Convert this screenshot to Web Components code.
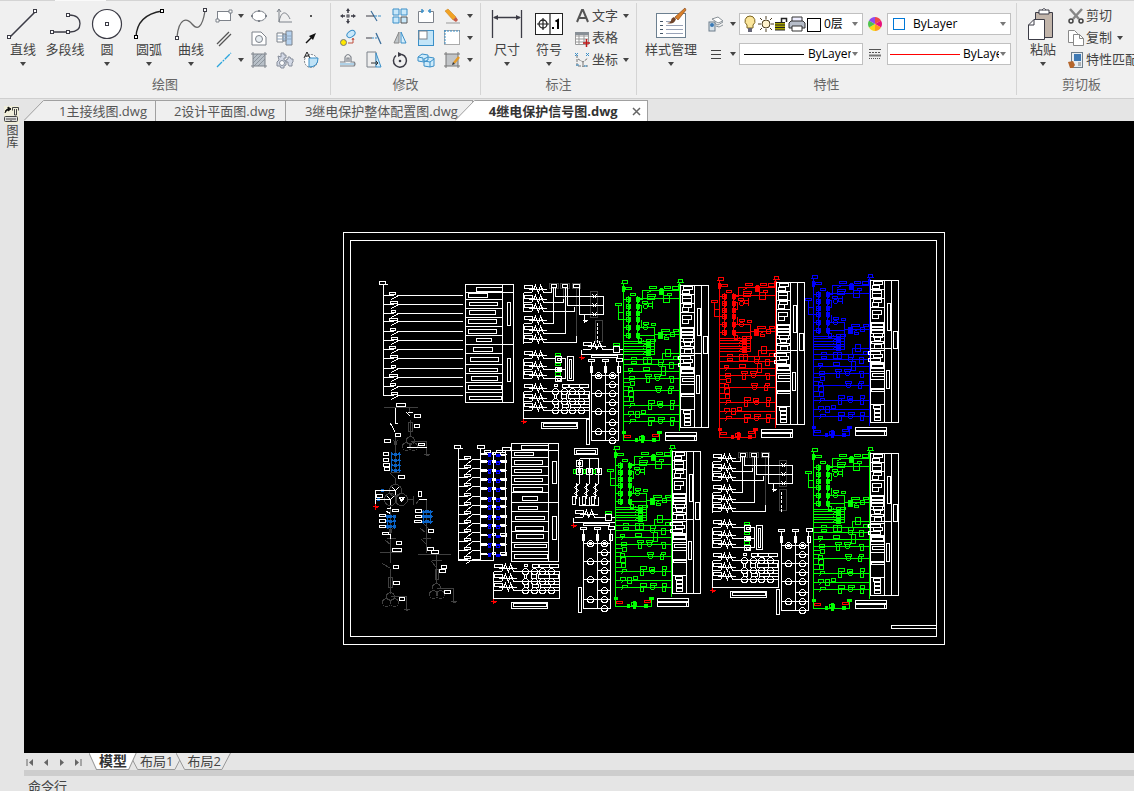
<!DOCTYPE html>
<html lang="zh-CN">
<head>
<meta charset="utf-8">
<title>4继电保护信号图.dwg</title>
<style>
html, body { height: 100%; }
body {
  margin: 0; overflow: hidden; background: #e5e5e5; color: #444;
  font: 13px/18px "Open Sans", "Noto Sans CJK SC", sans-serif;
}
</style>
</head>
<body>
<cad-app></cad-app>
<script>
/* ---------- icons ---------- */
const K = '#3c3c46', G = '#7d828a', B = '#3a8fc8';
const node = (x, y, c = K) => `<rect x="${x}" y="${y}" width="3" height="3" fill="#fff" stroke="${c}"/>`;
const ICONS = {
  line: [34, 34, `<path d="M4 30 30 4" stroke="${K}" stroke-width="1.6"/>${node(1.5, 28.5)}${node(27.5, 2.5)}`],
  polyline: [34, 34, `<path d="M5 25H22C30 25 32 21 32 16.500S29 8 21 8" fill="none" stroke="${K}" stroke-width="1.300"/>${node(2.5, 23.500)}${node(18.500, 23.500)}${node(18.500, 6.500)}`],
  circle: [34, 34, `<circle cx="17" cy="17" r="14.500" fill="#fff" stroke="${K}" stroke-width="1.200"/>${node(15.500, 15.500)}`],
  arc: [34, 34, `<path d="M4 30Q5 8 30 4" fill="none" stroke="#222" stroke-width="1.300"/>${node(2.500, 28.500, '#000')}${node(28.500, 2.500, '#000')}`],
  curve: [34, 34, `<path d="M3 30C5 10 13 11 18 17S28 22 31 4" fill="none" stroke="#666" stroke-width="1.300"/>${node(1.500, 29.500)}${node(29.500, 1.500)}`],
  rect: [18, 18, `<rect x="2.500" y="4.500" width="13" height="9" fill="#fff" stroke="${G}"/><path d="M1 12h3v3H1zM14 3h3v3h-3z" fill="#fff" stroke="${G}"/>`],
  ellipse: [18, 18, `<ellipse cx="9" cy="9" rx="7" ry="5" fill="#fff" stroke="${G}"/><path d="M1 8h2v2H1zM15 8h2v2h-2zM8 3h2v2H8zM8 13h2v2H8z" fill="${G}"/>`],
  graph: [18, 18, `<path d="M3 2v13h13M1 5l2-3 2 3M3 15C5 4 10 3 14 12" fill="none" stroke="${G}"/>`],
  point: [18, 18, `<rect x="8" y="8" width="2" height="2" fill="#555"/>`],
  dline: [18, 18, `<path d="M2 15 14 3M4 17 16 5" stroke="#555" stroke-width="1.300"/>`],
  region: [18, 18, `<path d="M2 3h9l5 5v8H2z" fill="#fff" stroke="${G}"/><circle cx="9" cy="10" r="3.500" fill="#e8eef2" stroke="${G}"/>`],
  bolt: [18, 18, `<path d="M1 4h6v9H1z" fill="#fff" stroke="${G}"/><path d="M7 5h3v7H7zM10 2h6v14h-6z" fill="#b5d2f0" stroke="${G}"/><path d="M1 7h15M1 10h15" stroke="#8fa6bd"/>`],
  arrow: [18, 18, `<path d="M4 14 10 8" stroke="#111" stroke-width="1.500"/><path d="M7 7l7-3-3 7z" fill="#111"/>`],
  cline: [18, 18, `<path d="M2 16 16 2" stroke="#2ba5dc" stroke-width="1.300" stroke-dasharray="7 1 2 1"/>`],
  hatch: [18, 18, `<rect x="3" y="3" width="12" height="12" fill="#b8c0c8"/><path d="M3 8l5-5M3 12l9-9M4 15 15 4M8 15l7-7" stroke="#8e969e"/><path d="M3 1v16M15 1v16M1 3h16M1 15h16" stroke="${G}"/>`],
  gears: [18, 18, `<path d="M5 2h3v2h2v3H8v2l2 1v4l-2 1v2H5l-1-2H1v-4l2-2-1-4 3 1z" fill="#d3d9e6" stroke="#858c99"/><path d="M12 6h2l1 2h2v3l-1 1v3h-3l-1-2v-2h-2V9l2-1z" fill="#d3d9e6" stroke="#858c99"/><circle cx="6" cy="12" r="2.500" fill="#fff" stroke="#858c99"/>`],
  area: [18, 18, `<circle cx="9" cy="10" r="6.500" fill="#fff" stroke="${G}" stroke-dasharray="2 1"/><path d="M7 7h9q0 9-9 9z" fill="#bfe2f6" stroke="${B}"/><path d="M2 7 5 1l3 6M3 5h4" fill="none" stroke="#222"/>`],
  move: [18, 18, `<path d="M9 3v3M9 12v3M3 9h3M12 9h3" stroke="${K}" stroke-width="1.500"/><path d="M9 1 7 4h4zM9 17l-2-3h4zM1 9l3-2v4zM17 9l-3-2v4z" fill="${K}"/><rect x="8" y="8" width="2" height="2" fill="#fff" stroke="${K}"/>`],
  trim: [18, 18, `<path d="M6 4 12 14" stroke="#3b6d9a" stroke-width="1.200"/><path d="M1 9h8" stroke="${K}"/><path d="M9 9h8" stroke="${B}" stroke-dasharray="3 1"/>`],
  array: [18, 18, `<path d="M2 2h6v6H2zM10 2h6v6h-6zM2 10h6v6H2z" fill="#c9e8fa" stroke="${B}"/><path d="M10 10h6v6h-6z" fill="#c9e8fa" stroke="#555"/>`],
  brk: [18, 18, `<path d="M5 4.500H1.500v11h15v-11H13" fill="#fff" stroke="${G}"/><path d="M5 2v4M13 2v4M7 4H5M11 4h2" stroke="${B}" stroke-width="1.500"/>`],
  erase: [18, 18, `<path d="M2 4l3-2 8 8-3 3z" fill="#f2a324" stroke="#c47a12" stroke-width=".5"/><path d="M10 13l3-3 2 3-2 2z" fill="#c45c4a"/><path d="M3 16h14" stroke="#999"/>`],
  copy: [18, 18, `<circle cx="4.500" cy="13.500" r="3" fill="#ffe800" stroke="#777"/><ellipse cx="12" cy="5" rx="4.500" ry="3" transform="rotate(-35 12 5)" fill="#c9e8fa" stroke="${B}"/><path d="M9 14h5v-4M13 11l1-2 1 2" fill="none" stroke="#c05040"/>`],
  extend: [18, 18, `<path d="M11 4l5 11" stroke="#3b6d9a" stroke-width="1.300"/><path d="M1 9h6" stroke="${K}"/><path d="M7 9h6" stroke="${B}" stroke-dasharray="2 1"/>`],
  mirror: [18, 18, `<path d="M8 3v11H3z" fill="#bfc5c9" stroke="#888"/><path d="M10 3v11h5z" fill="#d8effc" stroke="${B}"/>`],
  scale: [18, 18, `<rect x="1.500" y="1.500" width="15" height="15" fill="#c3e5f8" stroke="${B}"/><rect x="2" y="2" width="8" height="8" fill="#fff" stroke="${G}"/>`],
  dash: [18, 18, `<rect x="1.500" y="1.500" width="15" height="14" fill="#fff" stroke="#aaa"/><path d="M1 2h16M2 1v15" stroke="${B}" stroke-dasharray="2 1"/>`],
  offset: [18, 18, `<path d="M1 11h5V6q3-5 6 0v5h3q2 2 0 4H1M8 11V7h2v4" fill="none" stroke="${G}" stroke-width="1.200"/><path d="M1 13h14" stroke="#6fb1dd"/>`],
  stretch: [18, 18, `<path d="M2 1h9v15H2z" fill="#eee" stroke="${G}"/><path d="M11 2l5 14h-5z" fill="#d0ecfb" stroke="${B}"/><path d="M6 12h7M11 10l2 2-2 2" fill="none" stroke="#333"/>`],
  rotate: [18, 18, `<path d="M11 3.500A6.500 6.500 0 1 1 5 4.500" fill="none" stroke="${K}" stroke-width="1.500"/><path d="M7 1l5 2.500L7 6z" fill="${K}"/><circle cx="9" cy="10" r="1.300" fill="${K}"/>`],
  explode: [18, 18, `<path d="M1 6l4-3 6 1v5l-4 2-6-1zM7 8l4-2 6 1v8l-4 1-6-1z" fill="#d0ecfb" stroke="${B}"/><path d="M7 10l6 1v5M13 11l4-3M1 6l5 1v3" fill="none" stroke="${B}"/>`],
  hedit: [18, 18, `<rect x="3" y="3" width="12" height="12" fill="#c2c5c8"/><path d="M3 1v16M15 1v16M1 3h16M1 15h16" stroke="#777"/><path d="M11 12l5-6" stroke="#e39a28" stroke-width="2.500"/><path d="M9 14l1-3 2 2z" fill="#333"/>`],
  dim: [34, 34, `<path d="M2.500 3v28M31.500 3v28M4 10.500h26" stroke="${K}" stroke-width="1.300"/><path d="M3 10.500l5-2.500v5zM31 10.500l-5-2.500v5z" fill="${K}"/>`],
  symbol: [34, 34, `<rect x="3.500" y="6.500" width="27" height="21" fill="#fff" stroke="#222"/><path d="M18 6v21M5 17h12M11 11v12" stroke="#222" stroke-width="1.200"/><circle cx="11" cy="17" r="4" fill="none" stroke="#222" stroke-width="1.300"/><rect x="20" y="20" width="2" height="2"/><path d="M23.500 14.500 26 13v9" fill="none" stroke="#000" stroke-width="2"/>`],
  text: [18, 18, `<path d="M4 15 9 3h1l5 12M6 11h7" fill="none" stroke="#555" stroke-width="2"/>`],
  table: [18, 18, `<path d="M2.500 3.500h13v12h-13zM2 7h14M2 10h14M2 13h14M6 4v12M11 4v12" fill="#fff" stroke="#999"/><path d="M2 3h14v3H2z" fill="#888f96"/><path d="M10 14h7M13.500 10v8" stroke="#c01818" stroke-width="1.500"/>`],
  coord: [18, 18, `<path d="M4 4v11h11M5 8l5 3 5-4M10 11v5" fill="none" stroke="#777" stroke-dasharray="3 1"/><path d="M2 2l3 3M5 2 2 5M13 2l3 3M16 2l-3 3M3 14h3M11 15h3" stroke="${B}"/>`],
  styles: [34, 34, `<rect x="2.500" y="6.500" width="29" height="24" fill="#fff" stroke="#6c8090"/><path d="M6 14.500h3M6 18.500h3M6 22.500h3M6 26.500h3" stroke="#456" /><path d="M12 14.500h8M12 18.500h17M12 22.500h17M12 26.500h17" stroke="#9aa3b8"/><path d="M31 1l-10 9 3 3 8-10z" fill="#d9802a" stroke="#8b4c1c" stroke-width=".7"/><path d="M13 16q7 2 9-4l-2-2q-3 1-3 4-1 2-4 2z" fill="#70442a"/>`],
  layers: [18, 18, `<path d="M5 4l6-2 5 4-5 2zM7 8l4 2 5-3M9 11l3 1 4-2" fill="#fff" stroke="#8a9298"/><rect x="2" y="7" width="6" height="9" fill="#d7e2ea" stroke="#6d7d8a"/><circle cx="5" cy="10" r="2" fill="#3a79b5"/>`],
  weights: [18, 18, `<path d="M4 5.500h10M4 9.500h10M4 13.500h10" stroke="#444"/>`],
  wheel: [18, 18, `<path d="M9 9V2a7 7 0 0 1 6 3.500z" fill="#ef4848"/><path d="M9 9 15 5.500a7 7 0 0 1 0 7z" fill="#e8117c"/><path d="M9 9l6 3.500A7 7 0 0 1 9 16z" fill="#ff9d1c"/><path d="M9 9v7a7 7 0 0 1-6-3.500z" fill="#f7d916"/><path d="M9 9l-6 3.500a7 7 0 0 1 0-7z" fill="#4fc34d"/><path d="M9 9 3 5.500A7 7 0 0 1 9 2z" fill="#8d4cf0"/>`],
  types: [18, 18, `<path d="M3 4.500h12" stroke="#555"/><path d="M3 7.500h12" stroke="#555" stroke-dasharray="2 1"/><path d="M3 10.500h12" stroke="#777" stroke-width="2"/><path d="M3 13.500h12" stroke="#555" stroke-dasharray="1 1"/>`],
  bulb: [16, 18, `<path d="M8 1a5 5 0 0 1 3 9v3H5v-3a5 5 0 0 1 3-9z" fill="#fbe69c" stroke="#7b6420"/><path d="M6 13h4v4H6z" fill="#667"/>`],
  sun: [16, 18, `<circle cx="8" cy="9" r="4" fill="#fff3cd" stroke="#4b3d20"/><path d="M8 1v3M8 14v3M0 9h3M13 9h3M2 3l2 2M12 13l2 2M14 3l-2 2M4 13l-2 2" stroke="#4b3d20"/>`],
  lock: [14, 18, `<path d="M7.500 8V3.500h5V7" fill="none" stroke="#222" stroke-width="1.500"/><path d="M1 7h10v8H1z" fill="#a8a400"/><path d="M1 7.500h10M1 10h10M1 12.500h10M1 15h10" stroke="#222"/>`],
  printer: [18, 18, `<path d="M4 7V2h10v5" fill="#eef" stroke="#333"/><path d="M1 8l2-2h12l2 2v5H1z" fill="#b6bdc9" stroke="#333"/><path d="M4 11h10v5H4z" fill="#fff" stroke="#333"/>`],
  swatch: [15, 18, `<rect x="1.500" y="3.500" width="13" height="13" fill="#fff" stroke="#000"/>`],
  cyan: [16, 18, `<rect x="3.500" y="3.500" width="11" height="11" fill="#fff" stroke="#0078d7"/>`],
  paste: [34, 34, `<path d="M9.500 5.500h17v25h-17z" fill="#c2b5aa" stroke="${K}"/><path d="M13 3h10v4H13z" fill="#fff" stroke="${K}"/><path d="M16 3q2-3 4 0" fill="#fff" stroke="${K}"/><path d="M8 12.500h10.500v20H2.500V18z" fill="#fff" stroke="${K}"/><path d="M8 12.500V18H2.500" fill="none" stroke="${K}"/>`],
  cut: [18, 18, `<path d="M3 2l9 10M15 2 6 12" stroke="#888" stroke-width="2.500"/><circle cx="4" cy="14" r="2" fill="#eee" stroke="#444" stroke-width="1.500"/><circle cx="14" cy="14" r="2" fill="#eee" stroke="#444" stroke-width="1.500"/>`],
  copy2: [18, 18, `<path d="M1.500 1.500h6l3 3v9h-9z" fill="#fff" stroke="#888"/><path d="M6.500 5.500h6l4 4v7h-10z" fill="#fff" stroke="#888"/><path d="M12.500 5.500v4h4" fill="none" stroke="#888"/>`],
  match: [18, 18, `<rect x="4.500" y="1.500" width="11" height="15" fill="#e7edf2" stroke="#6d7d8a"/><rect x="7" y="3" width="7" height="7" fill="#3e79b4"/><path d="M11 12h3M11 14h3" stroke="#777"/><path d="M1 11l5-1 2 4-2 3H3z" fill="#b5662c"/>`],
  dock: [17, 18, `<path d="M1 0h15v18H1z" fill="#f0eeda"/><path d="M2 7q0-4 4-4M5 1l3 2-3 2z" fill="#111" stroke="#111"/><path d="M9.500 4.500v-3h6v3M11.500 3v6h2V3" fill="none" stroke="#444"/><rect x="1.500" y="10.500" width="13" height="5" rx="1" fill="#ddd" stroke="#444"/><path d="M3 13h4M9 13h4M8 12v3" stroke="#444"/>`],
  close: [10, 10, `<path d="M1 2l7 7M8 2 1 9" stroke="#666" stroke-width="1.500"/>`],
  caret: [8, 4, `<path d="M1 0h6L4 4z" fill="#444"/>`],
  drop: [8, 4, `<path d="M1 0h6L4 4z" fill="#777"/>`],
  first: [10, 10, `<path d="M2 2v7" stroke="#666"/><path d="M8 2v7L4 5.500z" fill="#666"/>`],
  prev: [10, 10, `<path d="M7 2v7L3 5.500z" fill="#666"/>`],
  next: [10, 10, `<path d="M3 2v7l4-3.500z" fill="#666"/>`],
  last: [10, 10, `<path d="M8 2v7" stroke="#666"/><path d="M2 2v7l4-3.500z" fill="#666"/>`],
};
const icon = n => {
  const [w, h, body] = ICONS[n];
  return `<svg width="${w}" height="${h}" viewBox="0 0 ${w} ${h}" aria-hidden="true">${body}</svg>`;
};

/* ---------- base ---------- */
const RESET = `*{box-sizing:border-box} svg{display:block;flex:none}
button{font:inherit;color:inherit;background:none;border:0;margin:0;padding:0;cursor:default}`;
function element(name, css, render) {
  customElements.define(name, class extends HTMLElement {
    connectedCallback() {
      if (this.shadowRoot) return;
      this.attachShadow({ mode: 'open' }).innerHTML = `<style>${RESET}${css}</style>${render(this)}`;
    }
  });
}

/* ---------- ribbon ---------- */
element('big-tool', `
  :host{display:block;width:42px;flex:none}
  button{display:flex;flex-direction:column;align-items:center;width:100%;padding-top:2px;white-space:nowrap}
  .label{line-height:16px}
  .caret{margin-top:5px}`,
  e => `<button type="button">${icon(e.getAttribute('icon'))}<span class="label">${e.getAttribute('label')}</span><span class="caret">${e.hasAttribute('plain') ? '' : icon('caret')}</span></button>`);

element('small-tool', `
  :host{display:grid;place-items:center;height:22px}`,
  e => `<button type="button" aria-label="${e.getAttribute('name')}">${icon(e.getAttribute('icon'))}</button>`);

element('row-tool', `
  :host{display:block}
  button{display:flex;align-items:center;height:22px;white-space:nowrap}
  .label{padding:0 0 2px 1px}
  .caret{margin-left:4px}`,
  e => `<button type="button">${icon(e.getAttribute('icon'))}<span class="label">${e.getAttribute('label')}</span>${e.hasAttribute('caret') ? `<span class="caret">${icon('caret')}</span>` : ''}</button>`);

element('ribbon-group', `
  :host{display:flex;flex-direction:column;flex:none;margin:3px 0;padding-top:2px;border-right:1px solid #d4d4d4}
  .body{display:flex;height:70px}
  h2{margin:0;padding-bottom:2px;font:inherit;text-align:center;color:#666}`,
  e => `<div class="body"><slot></slot></div><h2>${e.getAttribute('label')}</h2>`);

element('property-box', `
  :host{display:block}
  label{display:flex;align-items:center;height:22px;width:124px;background:#fff;border:1px solid #c0c0c0;padding:0 3px 0 2px;color:#000}
  .lead{display:flex;align-items:center;flex:none}
  .rule{width:60px;height:1px;background:#000;margin:0 1px 0 2px}
  .rule.red{width:70px;background:red;margin:0}
  select{appearance:none;border:0;background:none;font:inherit;font-size:12px;color:inherit;flex:1;min-width:0;padding:0;margin:0 0 0 3px;height:20px;outline:0}`,
  e => {
    const kind = e.getAttribute('kind');
    const lead = {
      layer: icon('bulb') + icon('sun') + icon('lock') + icon('printer') + icon('swatch'),
      color: icon('cyan') + '<span style="width:4px"></span>',
      linetype: '<span class="rule"></span>',
      weight: '<span class="rule red"></span>',
    }[kind];
    return `<label><span class="lead">${lead}</span><select aria-label="${e.getAttribute('name')}"><option>${e.getAttribute('value')}</option></select>${icon('drop')}</label>`;
  });

element('cad-ribbon', `
  :host{display:flex;overflow:hidden;border-bottom:1px solid #cfcfcf;
    background:linear-gradient(90deg,#d4d4d4 55px,#fafafa 55px 106px,#d4d4d4 106px) top/100% 1px no-repeat #f0f0f0}
  .grid{display:grid;align-content:start}
  .draw{grid-template-columns:24px 10px 26px 26px 26px;padding-right:6px}
  .edit{grid-template-columns:repeat(5,26px) 10px;padding:0 5px 0 4px}
  .rows{display:flex;flex-direction:column}
  .first{padding-left:2px}
  .pad{padding-left:5px}
  .props{display:grid;grid-template-columns:22px 12px 124px 24px 124px;row-gap:8px;align-content:start;align-items:center;padding:8px 5px 0 6px}
  .car{display:grid;place-items:center;height:22px}
  .style{width:56px;margin-left:6px}
  .note{width:66px;padding-left:3px}
  .clip{width:82px;padding-left:3px}`,
  () => {
    const S = (i, n) => `<small-tool icon="${i}" name="${n}"></small-tool>`;
    const C = () => `<span class="car">${icon('caret')}</span>`;
    return `
  <ribbon-group label="绘图">
    <div class="first"></div>
    <big-tool icon="line" label="直线"></big-tool><big-tool icon="polyline" label="多段线" plain></big-tool>
    <big-tool icon="circle" label="圆"></big-tool><big-tool icon="arc" label="圆弧"></big-tool><big-tool icon="curve" label="曲线"></big-tool>
    <div class="grid draw">
      ${S('rect', '矩形')}${C()}${S('ellipse', '椭圆')}${S('graph', '函数曲线')}${S('point', '点')}
      ${S('dline', '双线')}<span></span>${S('region', '面域')}${S('bolt', '螺栓')}${S('arrow', '箭头')}
      ${S('cline', '中心线')}${C()}${S('hatch', '填充')}${S('gears', '齿轮')}${S('area', '面积')}
    </div>
  </ribbon-group>
  <ribbon-group label="修改">
    <div class="grid edit">
      ${S('move', '移动')}${S('trim', '修剪')}${S('array', '阵列')}${S('brk', '打断')}${S('erase', '删除')}${C()}
      ${S('copy', '复制对象')}${S('extend', '延伸')}${S('mirror', '镜像')}${S('scale', '缩放')}${S('dash', '边界')}${C()}
      ${S('offset', '偏移')}${S('stretch', '拉伸')}${S('rotate', '旋转')}${S('explode', '分解')}${S('hedit', '编辑填充')}${C()}
    </div>
  </ribbon-group>
  <ribbon-group label="标注">
    <div class="pad"></div>
    <big-tool icon="dim" label="尺寸"></big-tool><big-tool icon="symbol" label="符号"></big-tool>
    <div class="rows note">
      <row-tool icon="text" label="文字" caret></row-tool><row-tool icon="table" label="表格"></row-tool><row-tool icon="coord" label="坐标" caret></row-tool>
    </div>
  </ribbon-group>
  <ribbon-group label="特性">
    <big-tool class="style" icon="styles" label="样式管理"></big-tool>
    <div class="props">
      ${S('layers', '图层')}${C()}<property-box kind="layer" name="图层" value="0层"></property-box>${S('wheel', '颜色')}<property-box kind="color" name="颜色" value="ByLayer"></property-box>
      ${S('weights', '线宽')}${C()}<property-box kind="linetype" name="线型" value="ByLayer"></property-box>${S('types', '线型管理')}<property-box kind="weight" name="线宽" value="ByLayer"></property-box>
    </div>
  </ribbon-group>
  <ribbon-group label="剪切板">
    <div class="pad"></div>
    <big-tool icon="paste" label="粘贴"></big-tool>
    <div class="rows clip">
      <row-tool icon="cut" label="剪切"></row-tool><row-tool icon="copy2" label="复制" caret></row-tool><row-tool icon="match" label="特性匹配"></row-tool>
    </div>
  </ribbon-group>`;
  });

/* ---------- document tabs ---------- */
element('file-tab', `
  :host{display:flex;flex:none;height:21px;color:#555}
  button{height:21px;background:#efefef;border:1px solid #a0a0a0;border-width:1px 1px 0 0;padding:0 8px 0 15px;line-height:18px;white-space:nowrap;display:flex;align-items:center;gap:14px}
  :host([joined]) button{padding:0 10px 0 18px}
  :host([wide]) button{padding:0 14px 0 19px}
  :host([active]){color:#333;font-weight:bold;margin-left:-18px;z-index:1}
  :host([active]) button{background:#fff;padding:0 5px 0 14px}`,
  e => {
    const fill = e.hasAttribute('active') ? '#fff' : '#efefef';
    const slope = e.hasAttribute('joined') ? '' : `<svg width="20" height="21" viewBox="0 0 20 21"><path d="M0 21 20 0v21z" fill="${fill}"/><path d="M0 20.500 19.500.5H20" fill="none" stroke="#a0a0a0"/></svg>`;
    return `${slope}<button type="button"><slot></slot>${e.hasAttribute('active') ? icon('close') : ''}</button>`;
  });
element('file-tabs', `
  :host{display:flex;align-items:flex-end;height:22px;background:#e5e5e5;overflow:hidden}`,
  () => `<file-tab>1主接线图.dwg</file-tab><file-tab joined>2设计平面图.dwg</file-tab><file-tab joined wide>3继电保护整体配置图.dwg</file-tab><file-tab active>4继电保护信号图.dwg</file-tab>`);

/* ---------- layout tabs ---------- */
element('layout-tab', `
  :host{display:block;flex:none;margin-left:-8px;height:17px;font-size:13px}
  :host([active]){z-index:1;font-weight:bold;font-size:14px;margin-left:0;color:#333}
  button{display:block;position:relative;height:17px;line-height:14px;padding:0 11px 2px;font-size:inherit;font-weight:inherit}
  :host([active]) button{padding:0 10px 2px}
  svg{position:absolute;inset:0;width:100%;height:100%}
  span{position:relative}`,
  e => `<button type="button"><svg viewBox="0 0 58 17" preserveAspectRatio="none"><path d="M0 0 9 16.500H48L57 0" fill="${e.hasAttribute('active') ? '#fff' : '#e9e9e9'}" stroke="#999" vector-effect="non-scaling-stroke"/></svg><span><slot></slot></span></button>`);
element('layout-bar', `
  :host{display:flex;height:17px;background:#e5e5e5;padding-left:1px}
  nav{display:flex;align-items:center;gap:6px;width:64px}`,
  () => `<nav>${['first', 'prev', 'next', 'last'].map((n, i) => `<button type="button" aria-label="${['首个', '上一个', '下一个', '末个'][i]}">${icon(n)}</button>`).join('')}</nav>
  <layout-tab active>模型</layout-tab><layout-tab>布局1</layout-tab><layout-tab>布局2</layout-tab>`);

element('side-dock', `
  :host{display:block;width:24px;flex:none;background:#e5e5e5;padding:7px 0 0 3px}
  button{font-size:12px;line-height:16px;writing-mode:vertical-rl;width:16px}
  div{display:flex;flex-direction:column;align-items:flex-start}`,
  () => `<div>${icon('dock')}<button type="button">图库</button></div>`);

element('command-line', `
  :host{display:block;height:21px;overflow:hidden;border-top:6px solid #cdcdcd;background:#e5e5e5}
  p{margin:0;padding:0 4px;line-height:20px}`,
  () => `<p>命令行</p>`);

/* ---------- drawing ---------- */
/* Sheets are stored in drawing units, three to a screen pixel.
   R = rectangle, F = filled rectangle, C = circle, L = polyline. */
const UNIT = 3;
const PEN = { w: '#fff', g: '#0f0', r: '#f00', b: '#00f', k: '#404040', u: '#0a64c8' };
class Sheet {
  constructor() { this.out = []; }
  draw(pen, ox, oy, text) {
    const X = v => ox + Math.floor(v / UNIT), Y = v => oy + Math.floor(v / UNIT);
    let line = '', solid = '';
    for (const cmd of text.match(/[RFCL][^RFCL]*/g) || []) {
      const n = cmd.slice(1).trim().split(/\s+/).map(Number);
      if (cmd[0] === 'R' || cmd[0] === 'F') {
        for (let i = 0; i + 3 < n.length; i += 4) {
          const d = `M${X(n[i])} ${Y(n[i + 1])}H${X(n[i + 2])}V${Y(n[i + 3])}H${X(n[i])}z`;
          if (cmd[0] === 'F') solid += d;
          line += d;
        }
      } else if (cmd[0] === 'C') {
        for (let i = 0; i + 2 < n.length; i += 3) {
          const r = Math.round(n[i + 2] / UNIT);
          line += `M${X(n[i]) - r} ${Y(n[i + 1])}a${r} ${r} 0 1 0 ${2 * r} 0a${r} ${r} 0 1 0 ${-2 * r} 0`;
        }
      } else {
        line += 'M';
        for (let i = 0; i < n.length; i += 2) line += `${X(n[i])} ${Y(n[i + 1])} `;
      }
    }
    if (solid) this.out.push(`<path d="${solid}" fill="${PEN[pen]}"/>`);
    this.out.push(`<path d="${line}" fill="none" stroke="${PEN[pen]}"/>`);
  }
}
const span = (list, f) => list.map(f).join('');
const coil = (x, y) => `R${x + 3} ${y - 12} ${x + 27} ${y - 3}L${x + 15} ${y} ${x + 70} ${y}L${x} ${y + 9} ${x + 24} ${y + 9} ${x + 30} ${y} ${x + 36} ${y - 11} ${x + 39} ${y - 2} ${x + 44} ${y + 9} ${x + 48} ${y} ${x + 51} ${y - 11} ${x + 57} ${y} ${x + 61} ${y + 9} ${x + 70} ${y + 9}`;
const ground = (x, y) => `L${x} ${y - 9} ${x} ${y + 7}L${x - 8} ${y} ${x + 9} ${y}L${x - 4} ${y + 3} ${x + 6} ${y + 3}`;

/* relay scheme with its signal table */
function scheme(s, pen, ox, oy) {
  const a = ox - 63, b = oy - 10;
  s.draw(pen, a, b, `L190 35 190 505 298 505 298 480L358 30 358 475R187 25 202 34 355 22 368 31L181 35 203 35L348 31 371 31
   F187 42 194 57 355 37 361 55R195 45 214 52 212 65 225 71L205 70 205 200L232 70 232 200` +
   span([76, 97, 117, 137, 160, 184], y => `R199 ${y} 211 ${y + 12} 228 ${y} 238 ${y + 12}L205 ${y - 3} 205 ${y + 15}L208 ${y - 2} 208 ${y + 14}L232 ${y - 3} 232 ${y + 15}L236 ${y - 2} 236 ${y + 14}L196 ${y + 6} 212 ${y + 6}`) + `
   L190 82 199 82L190 121 175 121L190 142 199 142L190 165 199 165L190 190 199 190
   R166 94 185 100L175 100 175 142 190 142
   L239 82 247 82 247 55 358 55R268 43 289 49 313 43 331 49 337 43 355 52F302 50 308 67R298 52 310 67
   R262 67 286 73 262 74 284 82 310 70 328 91 322 65 335 71 248 88 262 94 265 95 277 102L239 80 358 80L277 85 277 110
   C255 102 6L239 100 245 100 245 121 239 121L262 62 276 55
   R250 151 266 157 275 154 287 160C257 167 6L239 165 283 165 283 247L244 142 244 165L239 190 283 190L283 187 358 187
   R304 172 328 179 340 172 356 179 295 181 307 199 332 182 343 193 314 196 326 202F299 181 303 199L312 193 322 186
   R235 200 244 211 260 202 286 208` +
   span([207, 215, 223, 231, 239, 247], y => `L190 ${y} 283 ${y}R260 ${y - 4} 272 ${y + 3}L250 ${y - 2} 258 ${y + 4}`) +
   span([262, 276, 298, 320, 355, 400, 427, 448], y => `L190 ${y} 358 ${y}`) +
   `L306 262 306 244 358 244R316 232 331 253 213 256 229 262 213 267 229 274 250 256 262 274 262 256 275 274 295 262 310 270 328 270 340 290 340 253 352 262 304 284 316 310 250 287 268 295 205 290 217 296C301 277 6
   R208 313 222 321 211 328 223 340 256 308 274 314 259 314 268 332 283 308 301 314 328 313 340 319 331 319 339 332C292 320 7
   L190 331 208 331L190 344 208 344R205 346 217 354 286 343 304 349 328 343 340 349 325 349 334 364C295 355 7
   L190 373 220 373L190 388 220 388R205 358 220 374 208 376 220 388 265 385 283 394 265 394 274 412 292 388 307 396 331 385 343 394 331 394 340 412 211 394 224 400C301 400 7
   R205 418 220 426 226 418 239 436 244 415 257 424 211 442 226 448 265 436 283 444 265 444 274 460 295 436 312 442 331 436 343 444 331 444 340 460C301 448 7
   F187 479 196 485 292 479 303 485 244 490 250 511 226 500 232 508 278 500 286 508R238 493 254 503` +
   span([298, 320, 355, 400, 427, 448], y => `L205 ${y + 9} 215 ${y}`));
  s.draw(pen === 'b' ? 'b' : 'r', a, b, 'R194 490 212 496 277 487 295 494');
  s.draw('w', a, b, `R361 40 446 466L403 40 403 466L424 40 424 466L361 244 424 244` +
   span([66, 93, 121, 165, 187, 207, 222, 230, 250, 286, 289, 304, 313, 337, 364, 412], y => `L361 ${y} 403 ${y}`) +
   `R370 43 397 52 367 55 388 65 367 69 394 79 367 79 394 91 370 96 394 106 367 106 385 118 367 130 394 142 367 142 385 155
   364 169 401 177 364 180 401 188 364 190 401 199 370 199 397 210 373 211 391 220 364 222 401 229 373 232 394 243 355 253 391 262 370 262 397 272 355 275 391 284 364 292 401 301 367 319 403 328 364 367 403 374 370 415 391 424 373 427 391 437 373 439 391 448 373 450 391 460
   412 109 422 190 430 193 442 244 409 310 418 364 316 481 409 505L316 493 409 493L316 490 409 490L403 493 403 505`);
}

/* current transformer circuits */
function meters(s, ox, oy) {
  s.draw('w', ox, oy, span([355, 385, 412], y => coil(460, y) + `L530 ${y + 9} 658 ${y + 9}C557 ${y + 9} 10 583 ${y + 9} 10 607 ${y + 9} 10 634 ${y + 9} 10`) +
   `L460 364 460 445 658 445 658 364R553 343 563 350 577 343 596 352 599 343 628 352 628 343 655 352 575 373 590 385 595 373 628 385 628 373 655 385 553 374 560 384 553 403 565 412 577 403 595 412 601 403 631 412 631 403 658 412
   R514 457 622 475 520 460 619 469`);
  s.draw('r', ox, oy, ground(460, 454));
}
function transformers(s, ox, oy, shift) {
  s.draw('k', ox, oy, `R538 40 566 54 571 40 599 54 607 40 631 54 661 64 682 142 ${676 - shift} 151 ${697 - shift} 214L619 55 619 195L580 55 580 85`);
  s.draw('w', ox, oy, span([58, 88, 115, 151, 181, 208, 256, 289, 316], y => coil(460, y)) +
   `L460 67 460 124L460 160 460 220L460 265 460 325L530 67 544 67 544 52L530 97 580 97 580 85L530 124 613 124 613 108
   L530 160 550 160 550 52L530 190 586 190 586 52L530 217 619 217 619 195
   R544 43 559 52 577 43 592 52 610 43 628 52L556 52 556 79 700 79L592 52 592 106 700 106L628 52 628 133 700 133 700 79
   L643 133 643 156L636 151 652 151L640 154 649 154` +
   span([79, 106, 133], y => `L667 ${y - 7} 678 ${y + 6}L667 ${y + 6} 678 ${y - 7}`) +
   span([156, 169, 182, 195, 207], y => `L${682 - shift} ${y} ${682 - shift} ${y + 9}`) +
   `L530 265 556 265L575 265 586 265 586 325 530 325L530 298 586 298R556 259 575 276 561 264 571 271 556 291 575 304 562 295 571 301 556 319 574 333 561 324 570 331 592 259 610 331 598 268 605 325`);
  s.draw('g', ox, oy, 'R556 250 572 256 556 280 572 286 556 307 572 316');
  meters(s, ox, oy);
}
function ladder(s, ox, oy, feed) {
  s.draw('w', ox, oy, `L64 290 64 526 145 526 145 290L106 290 106 526R55 283 73 289 97 283 116 289 139 280 158 289 143 304 152 322F61 304 67 322 103 304 109 322R49 463 58 538` +
   span([331, 385, 439, 499], y => `L64 ${y} 145 ${y}C84 ${y} 9`) +
   span([331, 358, 385, 412, 439, 472, 499, 526], y => `L106 ${y} 145 ${y}C127 ${y} 9`) + 'R81 327 87 334 123 327 129 334');
  if (!feed) return;
  s.draw('w', ox, oy, coil(36, 244) + 'L34 275 34 253L106 253 130 253L34 267 160 267L148 253 160 253R130 244 148 262 64 270 143 278');
  s.draw('g', ox, oy, 'R130 235 148 241');
  s.draw('r', ox, oy, ground(34, 277));
}

function sheet() {
  const s = new Sheet();
  s.draw('w', 0, 0, 'R1029 696 2834 1934 1050 720 2810 1910 2673 1875 2810 1886');

  /* upper feeder list */
  s.draw('w', 370, 270, `L40 44 40 376R27 34 46 43L27 43 53 43` +
   span([76, 103, 130, 154, 184, 211, 238, 265, 295, 322, 349, 376], (y, i) => `R${58 + (i % 3) * 3} ${y - 10} ${76 + (i % 2) * 6} ${y - 3}L40 ${y} 70 ${y}L64 ${y + 12} 84 ${y} 277 ${y}`) +
   `R286 43 430 397L397 43 397 397L286 67 430 67L286 223 430 223` +
   span([88, 115, 142, 168, 196, 250, 283, 310, 337, 367], y => `L286 ${y} 397 ${y}`) +
   `R319 52 397 65 295 70 352 82 298 97 382 107 298 121 376 133 295 148 379 160 295 178 379 190 319 205 364 214 310 232 367 244 301 262 385 274 298 295 382 304 304 319 382 331 295 346 395 358 298 379 395 388 412 97 421 166 412 265 421 334`);

  /* single-line diagram */
  s.draw('k', 370, 400, `L40 22 143 22L76 98 76 150L69 121 82 135L82 121 69 135L118 22 118 37L121 58 121 110R115 67 127 94C121 122 13 110 140 13 130 140 13
   L120 125 170 125 170 163L160 163 179 163L166 166 174 166L61 217 87 217L60 219 76 235 76 253C76 270 18 61 298 18 94 298 18
   L112 298 130 298L130 285 130 312L135 312 145 300L170 298 170 457L61 316 61 457L76 150 76 217L48 415 75 415L46 420 61 433L27 457 94 457L61 457 61 487L37 490 60 505L61 505 61 580R55 532 67 562
   C61 590 13 50 608 13 72 608 13L61 589 109 589 109 628L100 628 119 628L105 632 113 632
   L54 385 68 399L68 385 54 399L163 373 177 387L150 385 166 398L157 415 182 415L155 418 170 433L142 463 242 463L200 463 200 550L184 481 215 481L184 483 200 503R196 508 205 538
   C200 562 13 190 583 13 212 583 13L200 565 250 565 250 604L242 604 260 604L246 608 255 608`);
  s.draw('u', 370, 400, span([162, 180, 195, 210], y => `L61 ${y} 91 ${y}F63 ${y - 2} 67 ${y + 2} 84 ${y - 2} 88 ${y + 2}R72 ${y - 3} 79 ${y + 3}`) +
   span([349, 363, 379], y => `L46 ${y} 77 ${y}F49 ${y - 2} 54 ${y + 2} 70 ${y - 2} 75 ${y + 2}R58 ${y - 3} 65 ${y + 3}L155 ${y - 14} 186 ${y - 14}F157 ${y - 16} 162 ${y - 12} 179 ${y - 16} 184 ${y - 12}R166 ${y - 17} 174 ${y - 11}`) +
   'L65 155 65 213L87 155 87 213L52 343 52 385L73 343 73 385L159 328 159 370L181 328 181 370F34 268 41 275 22 295 29 302L28 271 46 271');
  s.draw('w', 370, 400, `R79 10 106 19 76 100 91 109 133 43 151 52 133 73 148 82 145 130 163 137 43 118 62 127 40 157 56 166 40 175 56 184 40 190 58 199 44 203 58 211 85 226 103 235 20 283 38 292 145 274 155 289
   67 328 86 334 28 343 46 350 28 358 46 367 28 376 46 383 37 397 56 403 79 424 95 433 67 445 95 454 70 496 86 505 70 544 88 553 88 592 103 601 136 328 155 337 136 346 155 353 133 361 155 368 175 388 191 397 172 442 190 451 184 451 206 460 214 496 230 505 208 508 227 517 223 571 242 580
   L76 22 76 69 83 69L60 70 76 98L112 37 128 37L108 38 121 50L108 142 170 142
   L68 263 76 271 84 263L76 271 76 283L53 290 61 298 69 290L61 298 61 312L87 292 103 292 95 305 87 292L97 296 95 301
   L76 271 16 271 16 312L16 298 61 298L145 298 170 298L61 318 61 325 50 325L50 335 62 340L56 403 61 403 61 415`);
  s.draw('r', 370, 400, ground(16, 320));

  /* lower feeder list */
  s.draw('w', 370, 400, `L265 145 265 481 370 481L331 145 331 481L370 155 370 481L406 150 406 463R254 136 271 145 322 136 343 145 343 151 361 157 379 151 397 157 397 142 422 150L254 145 277 145L322 145 343 145` +
   span([178, 205, 232, 259, 289, 316, 343, 370, 397, 424, 451, 477], y => `R283 ${y - 9} 301 ${y - 2}L265 ${y} 292 ${y}L290 ${y + 14} 306 ${y} 331 ${y}`) +
   span([162, 184, 212, 238, 265, 295, 320, 349, 376, 405, 434, 462], (y, i) => `L331 ${y} 352 ${y}L364 ${y} 378 ${y}L391 ${y} 409 ${y}R334 ${y - 3} 350 ${y + 2} 366 ${y - 4} 377 ${y + 2} 392 ${y - 4} ${406 + (i % 2) * 4} ${y + 3}`) +
   `R424 130 565 484L535 130 535 484L424 151 565 151L424 307 565 307` +
   span([172, 199, 226, 254, 278, 334, 363, 394, 427, 454], y => `L424 ${y} 535 ${y}`) +
   `R454 136 535 147 433 157 491 166 433 181 517 193 433 208 514 217 433 235 517 245 430 262 517 274 457 289 502 301 445 319 502 328 436 349 523 358 436 379 520 391 439 403 520 415 433 433 529 442 433 463 532 475 547 184 559 250 547 349 559 418`);
  s.draw('b', 370, 400, span([162, 184, 212, 238, 265, 295, 320, 349, 376, 405, 434, 462], y => `R354 ${y} 362 ${y + 8} 380 ${y} 388 ${y + 8}L351 ${y - 3} 364 ${y - 3}L378 ${y + 3} 391 ${y + 3}L354 ${y + 4} 362 ${y + 4}`));

  /* voltage signal group */
  s.draw('w', 370, 400, `R613 145 683 163 620 150 676 160L628 175 685 175R619 181 637 198 625 186 631 193L628 316 685 316` +
   span([628, 658, 685], x => `L${x} 175 ${x} 250L${x} 290 ${x} 316R${x - 9} 205 ${x + 9} 222 ${x - 3} 209 ${x + 3} 217L${x} 250 ${x - 14} 262 ${x - 4} 270 ${x - 16} 280 ${x - 4} 290L${x - 8} 247 ${x - 8} 295R${x - 20} 289 ${x - 12} 313`));
  s.draw('g', 370, 400, 'R610 208 616 220 640 208 646 220 670 208 676 220');

  transformers(s, 370, 270, 0);
  transformers(s, 559, 439, 15);
  meters(s, 340, 450);
  ladder(s, 570, 265, true);
  ladder(s, 562, 433, true);
  ladder(s, 760, 435, false);
  scheme(s, 'g', 623, 282);
  scheme(s, 'r', 719, 279);
  scheme(s, 'b', 813, 277);
  scheme(s, 'g', 615, 448);
  scheme(s, 'g', 813, 450);
  return s.out.join('');
}
element('drawing-view', `
  :host{display:block;min-height:0;background:#000;overflow:hidden}
  svg{width:100%;height:100%}`,
  () => `<svg viewBox="23.5 120.5 1110 632" shape-rendering="crispEdges" role="img" aria-label="继电保护信号图">${sheet()}</svg>`);

/* ---------- window ---------- */
element('cad-app', `
  :host{display:flex;flex-direction:column;height:100vh}
  .main{display:flex;flex:1;min-height:0}
  .work{display:flex;flex-direction:column;flex:1;min-width:0}
  drawing-view{flex:1}`,
  () => `<cad-ribbon></cad-ribbon>
  <div class="main"><side-dock></side-dock>
    <div class="work"><file-tabs></file-tabs><drawing-view></drawing-view><layout-bar></layout-bar><command-line></command-line></div>
  </div>`);
</script>
</body>
</html>
